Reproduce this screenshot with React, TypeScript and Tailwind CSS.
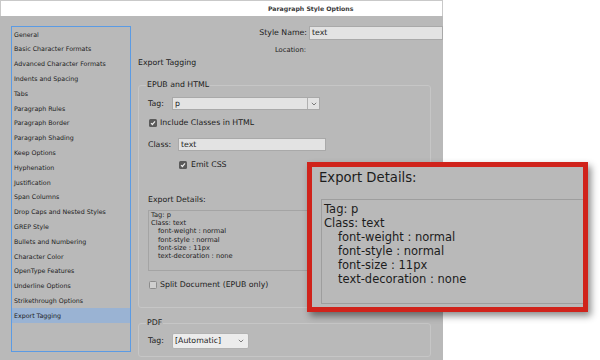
import React from 'react';

const sections = [
  'General',
  'Basic Character Formats',
  'Advanced Character Formats',
  'Indents and Spacing',
  'Tabs',
  'Paragraph Rules',
  'Paragraph Border',
  'Paragraph Shading',
  'Keep Options',
  'Hyphenation',
  'Justification',
  'Span Columns',
  'Drop Caps and Nested Styles',
  'GREP Style',
  'Bullets and Numbering',
  'Character Color',
  'OpenType Features',
  'Underline Options',
  'Strikethrough Options',
  'Export Tagging',
];

const details = [
  { text: 'Tag: p', indent: false },
  { text: 'Class: text', indent: false },
  { text: 'font-weight : normal', indent: true },
  { text: 'font-style : normal', indent: true },
  { text: 'font-size : 11px', indent: true },
  { text: 'text-decoration : none', indent: true },
];

const Checkbox = ({ checked }: { checked: boolean }) =>
  checked ? (
    <span className="flex h-[8px] w-[8px] shrink-0 items-center justify-center rounded-[1.5px] bg-[#5a5a5a]">
      <svg width="6" height="6" viewBox="0 0 6 6">
        <path d="M1 3.1 L2.4 4.5 L5 1.3" fill="none" stroke="#ececec" strokeWidth="1.2" />
      </svg>
    </span>
  ) : (
    <span className="h-[8px] w-[8px] shrink-0 rounded-[1.5px] border border-[#8c8c8c] bg-[#cfcfcf]" />
  );

const Chevron = () => (
  <svg width="6" height="4" viewBox="0 0 6 4">
    <path d="M0.8 0.8 L3 3 L5.2 0.8" fill="none" stroke="#6f6f6f" strokeWidth="0.9" />
  </svg>
);

export default function App() {
  return (
    <div className="relative h-[360px] w-[600px] overflow-hidden bg-white font-['DejaVu_Sans',sans-serif] text-[#1c1c1c]">
      <div className="flex h-full w-[443px] flex-col">
        {/* title bar */}
        <div className="flex h-[16px] shrink-0 items-center border-x border-t border-[#c9c9c9] bg-white pl-[267px] text-[6.2px] font-bold text-[#3a3a3a]">
          Paragraph Style Options
        </div>

        <div className="flex flex-1 bg-[#b9b9b9] pl-[11px] pt-[10px]">
          {/* section list */}
          <div className="h-[326px] w-[120px] shrink-0 border border-[#5b9be4]">
            {sections.map((s) => (
              <div
                key={s}
                className={`flex h-[14.8px] items-center pl-[2px] text-[6.3px] ${
                  s === 'Export Tagging' ? 'bg-[#9ab3d3]' : ''
                }`}
              >
                {s}
              </div>
            ))}
          </div>

          {/* options panel */}
          <div className="ml-[7px] flex flex-1 flex-col text-[7.8px] leading-[10px]">
            <div className="flex h-[14px] items-center justify-end">
              <span>Style Name:</span>
              <div className="ml-[2px] flex h-[14px] w-[134px] items-center border border-[#a9a9a9] bg-[#e3e3e3] pl-[2px]">
                text
              </div>
            </div>
            <div className="mt-[5.5px] flex justify-end pr-[137px] text-[6.8px] leading-[9px]">Location:</div>
            <div className="mt-[3.5px]">Export Tagging</div>

            <fieldset className="mt-[12px] w-[293px] rounded-[3px] border border-[#c6c6c6] pb-[17px] pl-[9px]">
              <legend className="-ml-[2px] px-[1px]">EPUB and HTML</legend>
              <div className="mt-[7px] flex h-[13px] items-center">
                <span className="w-[24px]">Tag:</span>
                <div className="flex h-[13px] w-[148px] border border-[#a9a9a9] bg-[#e3e3e3]">
                  <span className="flex flex-1 items-center pl-[2px]">p</span>
                  <span className="flex w-[12px] items-center justify-center border-l border-[#b0b0b0]">
                    <Chevron />
                  </span>
                </div>
              </div>
              <div className="mt-[8px] flex h-[10px] items-center pl-[1px]">
                <Checkbox checked />
                <span className="ml-[3px]">Include Classes in HTML</span>
              </div>
              <div className="mt-[10px] flex h-[13px] items-center">
                <span className="w-[30px]">Class:</span>
                <div className="flex h-[13px] w-[148px] items-center border border-[#a9a9a9] bg-[#e3e3e3] pl-[2px]">
                  text
                </div>
              </div>
              <div className="mt-[9px] flex h-[10px] items-center pl-[31px]">
                <Checkbox checked />
                <span className="ml-[4px]">Emit CSS</span>
              </div>
              <div className="mt-[25px] h-[10px]">Export Details:</div>
              <div className="mr-[10px] mt-[5px] h-[61px] border border-[#a4a4a4] pl-[2px] text-[6.7px] leading-[8.2px]">
                {details.map((d) => (
                  <div key={d.text} className={d.indent ? 'pl-[7px]' : ''}>
                    {d.text}
                  </div>
                ))}
              </div>
              <div className="mt-[9px] flex h-[10px] items-center pl-[1px]">
                <Checkbox checked={false} />
                <span className="ml-[3px]">Split Document (EPUB only)</span>
              </div>
            </fieldset>

            <fieldset className="mt-[10px] w-[293px] rounded-[3px] border border-[#c6c6c6] pb-[7px] pl-[9px]">
              <legend className="-ml-[2px] px-[1px]">PDF</legend>
              <div className="mt-[5px] flex h-[16px] items-center">
                <span className="w-[24px]">Tag:</span>
                <div className="flex h-[16px] w-[77px] items-center justify-between rounded-[2px] border border-[#b2b2b2] bg-[#ececec] pl-[2px] pr-[4px]">
                  <span>[Automatic]</span>
                  <Chevron />
                </div>
              </div>
            </fieldset>
          </div>
        </div>
      </div>

      {/* zoomed callout */}
      <div className="absolute left-[307px] top-[162px] h-[150px] w-[281px] overflow-hidden border-[5px] border-[#d0231b] bg-[#b9b9b9] pl-[7px] pt-[3px] shadow-[3px_4px_7px_rgba(0,0,0,0.45)]">
        <div className="text-[13.2px] leading-[16px]">Export Details:</div>
        <div className="ml-[2px] mt-[13px] h-[105px] w-[300px] border border-[#9e9e9e] pl-[2px] pt-[2px] text-[11.5px] leading-[14px]">
          {details.map((d) => (
            <div key={d.text} className={d.indent ? 'pl-[14px]' : ''}>
              {d.text}
            </div>
          ))}
        </div>
      </div>
    </div>
  );
}
